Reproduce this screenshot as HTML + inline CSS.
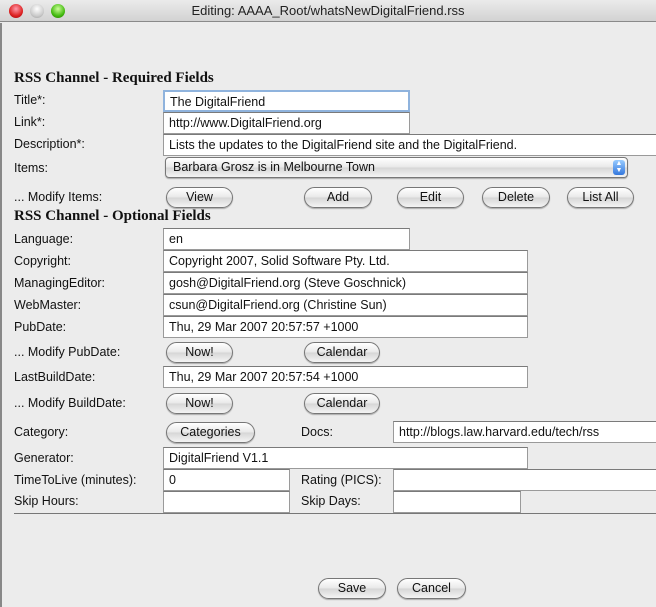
<!DOCTYPE html>
<html><head><style>
*{margin:0;padding:0;box-sizing:border-box}
body{width:656px;height:607px;overflow:hidden;background:#ececec;font-family:"Liberation Sans",sans-serif;font-size:12.5px;color:#111;position:relative}
.tb{position:absolute;left:0;top:0;width:656px;height:22px;background:linear-gradient(#ebebeb,#d2d2d2);border-bottom:1px solid #8a8a8a;text-align:center;line-height:22px;font-size:13px;color:#222}
.dot{position:absolute;top:4px;width:14px;height:14px;border-radius:50%}
.lb{position:absolute;left:14px;white-space:nowrap}
.h{position:absolute;left:14px;font-family:"Liberation Serif",serif;font-weight:bold;font-size:15px}
.f{position:absolute;background:#fff;border:1px solid #9a9a9a;border-top-color:#7a7a7a;padding-left:5px;white-space:nowrap;overflow:hidden;height:22px;line-height:20px}
.b{position:absolute;height:21px;border:1px solid #777;border-radius:11px;background:linear-gradient(#fff,#e8e8e8 50%,#d6d6d6 51%,#f4f4f4);text-align:center;line-height:19px;box-shadow:0 1px 1px #aaa}
</style></head><body>
<div class="tb">Editing: AAAA_Root/whatsNewDigitalFriend.rss</div>
<div class="dot" style="left:9px;background:radial-gradient(circle at 50% 35%,#f9a,#d22 60%,#901)"></div>
<div class="dot" style="left:30px;background:radial-gradient(circle at 50% 35%,#fff,#ccc 60%,#999)"></div>
<div class="dot" style="left:51px;background:radial-gradient(circle at 50% 35%,#cf9,#4b1 60%,#270)"></div>
<div style="position:absolute;left:0;top:23px;width:2px;height:584px;background:#888"></div>

<div class="h" style="top:70px">RSS Channel - Required Fields</div>
<div class="lb" style="top:93px">Title*:</div>
<div class="f" style="left:163px;top:90px;width:247px;border:2px solid #8fb3dd">The DigitalFriend</div>
<div class="lb" style="top:115px">Link*:</div>
<div class="f" style="left:163px;top:112px;width:247px">http://www.DigitalFriend.org</div>
<div class="lb" style="top:137px">Description*:</div>
<div class="f" style="left:163px;top:134px;width:500px">Lists the updates to the DigitalFriend site and the DigitalFriend.</div>
<div class="lb" style="top:161px">Items:</div>
<div class="b" style="left:165px;top:157px;width:463px;height:21px;border-radius:4px;text-align:left;padding-left:7px">Barbara Grosz is in Melbourne Town<span style="position:absolute;right:2px;top:2px;width:12px;height:15px;border-radius:3px;background:linear-gradient(#9cf,#37d);color:#fff;font-size:7px;line-height:7px;text-align:center">▲<br>▼</span></div>
<div class="lb" style="top:190px">... Modify Items:</div>
<div class="b" style="left:166px;top:187px;width:67px">View</div>
<div class="b" style="left:304px;top:187px;width:68px">Add</div>
<div class="b" style="left:397px;top:187px;width:67px">Edit</div>
<div class="b" style="left:482px;top:187px;width:68px">Delete</div>
<div class="b" style="left:567px;top:187px;width:67px">List All</div>

<div class="h" style="top:208px">RSS Channel - Optional Fields</div>
<div class="lb" style="top:232px">Language:</div>
<div class="f" style="left:163px;top:228px;width:247px">en</div>
<div class="lb" style="top:254px">Copyright:</div>
<div class="f" style="left:163px;top:250px;width:365px">Copyright 2007, Solid Software Pty. Ltd.</div>
<div class="lb" style="top:276px">ManagingEditor:</div>
<div class="f" style="left:163px;top:272px;width:365px">gosh@DigitalFriend.org (Steve Goschnick)</div>
<div class="lb" style="top:298px">WebMaster:</div>
<div class="f" style="left:163px;top:294px;width:365px">csun@DigitalFriend.org (Christine Sun)</div>
<div class="lb" style="top:320px">PubDate:</div>
<div class="f" style="left:163px;top:316px;width:365px">Thu, 29 Mar 2007 20:57:57 +1000</div>
<div class="lb" style="top:345px">... Modify PubDate:</div>
<div class="b" style="left:166px;top:342px;width:67px">Now!</div>
<div class="b" style="left:304px;top:342px;width:76px">Calendar</div>
<div class="lb" style="top:370px">LastBuildDate:</div>
<div class="f" style="left:163px;top:366px;width:365px">Thu, 29 Mar 2007 20:57:54 +1000</div>
<div class="lb" style="top:396px">... Modify BuildDate:</div>
<div class="b" style="left:166px;top:393px;width:67px">Now!</div>
<div class="b" style="left:304px;top:393px;width:76px">Calendar</div>
<div class="lb" style="top:425px">Category:</div>
<div class="b" style="left:166px;top:422px;width:89px">Categories</div>
<div class="lb" style="top:425px;left:301px">Docs:</div>
<div class="f" style="left:393px;top:421px;width:270px">http://blogs.law.harvard.edu/tech/rss</div>
<div class="lb" style="top:451px">Generator:</div>
<div class="f" style="left:163px;top:447px;width:365px">DigitalFriend V1.1</div>
<div class="lb" style="top:473px">TimeToLive (minutes):</div>
<div class="f" style="left:163px;top:469px;width:127px">0</div>
<div class="lb" style="top:473px;left:301px">Rating (PICS):</div>
<div class="f" style="left:393px;top:469px;width:270px"></div>
<div class="lb" style="top:494px">Skip Hours:</div>
<div class="f" style="left:163px;top:491px;width:127px"></div>
<div class="lb" style="top:494px;left:301px">Skip Days:</div>
<div class="f" style="left:393px;top:491px;width:128px"></div>
<div style="position:absolute;left:14px;top:513px;width:642px;height:1px;background:#777"></div>
<div class="b" style="left:318px;top:578px;width:68px">Save</div>
<div class="b" style="left:397px;top:578px;width:69px">Cancel</div>
</body></html>
